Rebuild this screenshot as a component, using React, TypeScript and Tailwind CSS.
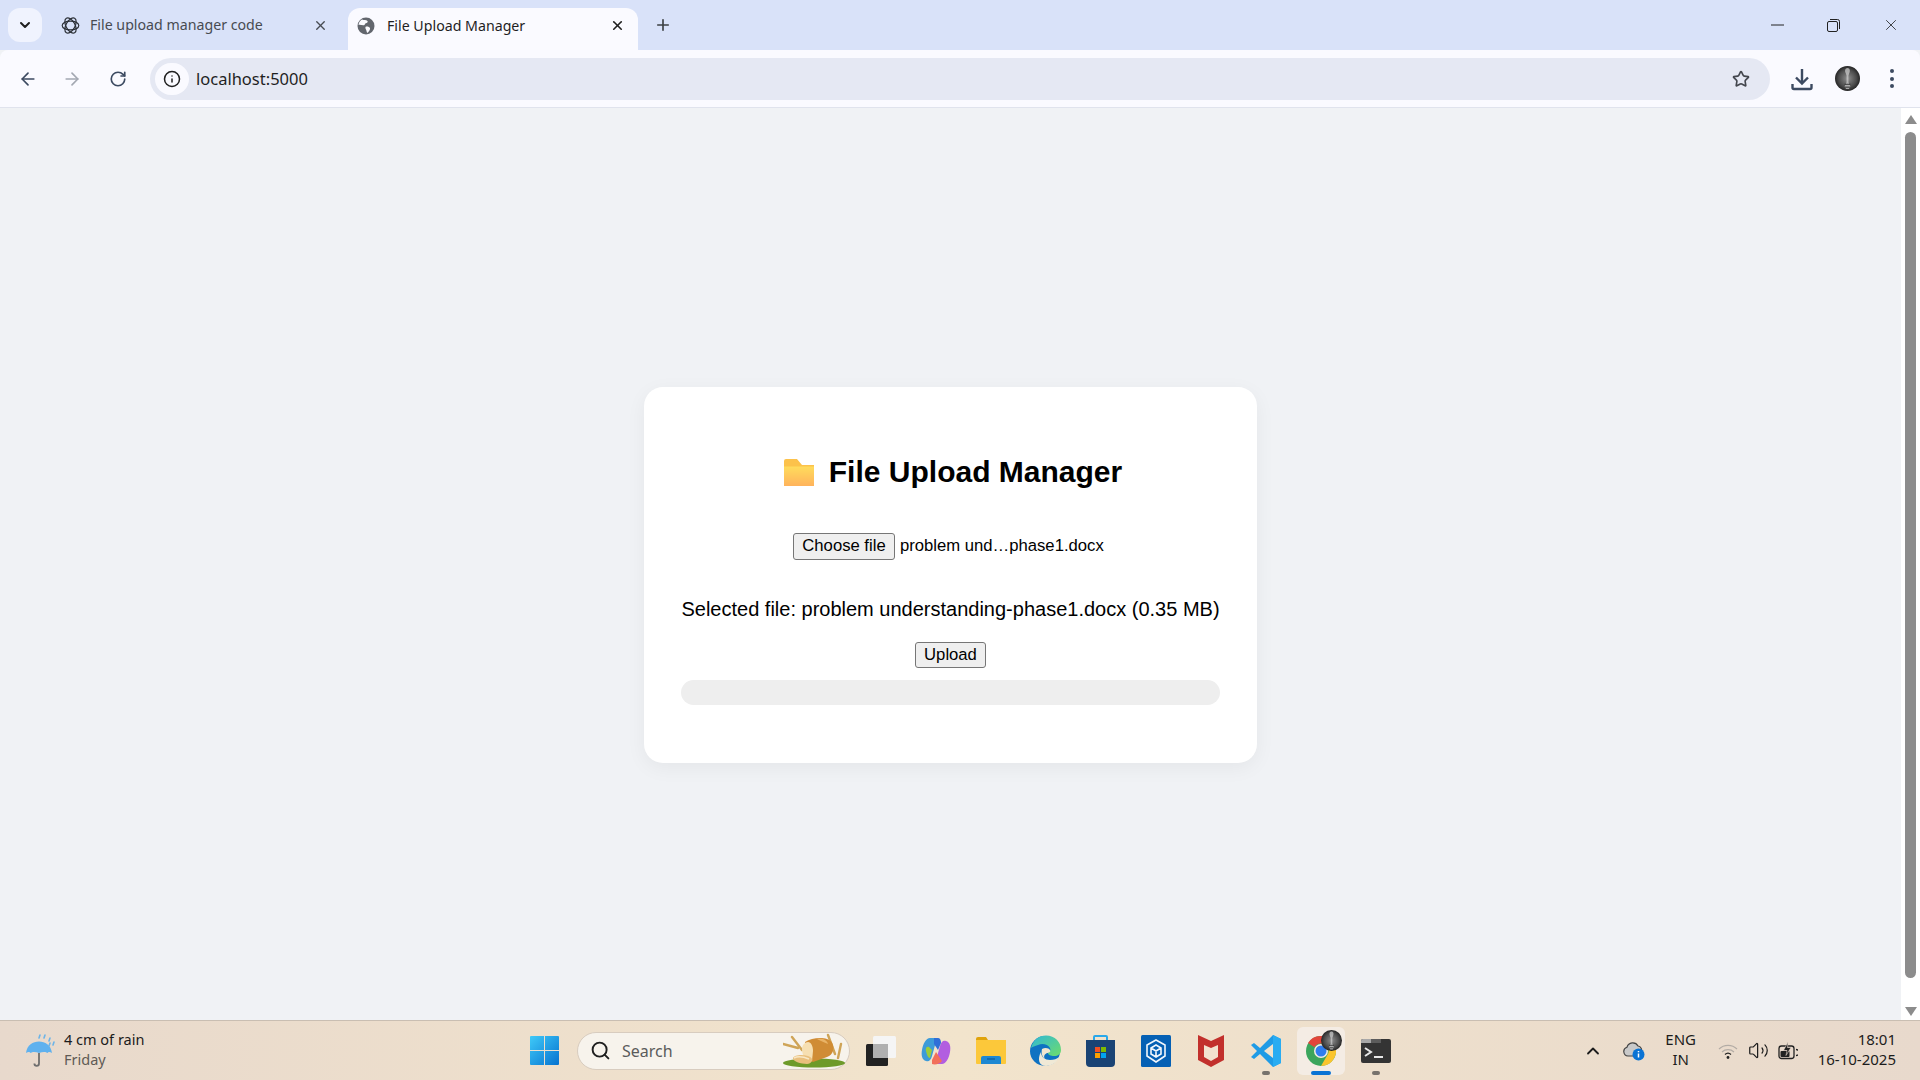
import { ArrowLeft, ArrowRight, ChevronDown, ChevronUp, Info, Plus, RotateCw, Search, Star, Volume2, X } from 'lucide-react';

const uiFont = "font-['Noto_Sans',sans-serif]";

function GptIcon() {
    return (
        <svg width="19" height="19" viewBox="0 0 24 24" fill="none" stroke="#2b2f36" strokeWidth="1.500">
            <ellipse cx="12" cy="12" rx="10.500" ry="5.600" />
            <ellipse cx="12" cy="12" rx="10.500" ry="5.600" transform="rotate(60 12 12)" />
            <ellipse cx="12" cy="12" rx="10.500" ry="5.600" transform="rotate(120 12 12)" />
        </svg>
    );
}

function GlobeIcon() {
    return (
        <svg width="18" height="18" viewBox="0 0 18 18">
            <circle cx="9" cy="9" r="8.500" fill="#62666d" />
            <path d="M5 2.500c2 .8 4 .3 5.500 1.500.8 1-.6 2-1.800 2.300-1 .4-.6 1.800-1.800 2C5.500 8.600 3 7.500 1.500 8 1.800 5.600 3 3.600 5 2.500zM9 9.500c1.500-.4 3.500.2 4 1.500.4 1.500-1 3.500-2.500 5-1-.6-.8-2.500-1.500-3.500-.6-1-1-2.500 0-3z" fill="#fafaff" />
        </svg>
    );
}

function DownloadIcon() {
    return (
        <svg width="22" height="24" viewBox="0 0 22 24" fill="none" stroke="#3c4a61" strokeWidth="2.400">
            <path d="M11 2v14M5 10.500l6 6 6-6" />
            <path d="M1.500 17v3.500a1.500 1.500 0 0 0 1.500 1.500h16a1.500 1.500 0 0 0 1.500-1.500V17" />
        </svg>
    );
}

function Avatar({ size }: { size: number }) {
    return (
        <svg width={size} height={size} viewBox="0 0 26 26">
            <defs>
                <radialGradient id={`av${size}`} cx="50%" cy="50%" r="55%">
                    <stop offset="0%" stopColor="#8f8f8f" />
                    <stop offset="65%" stopColor="#4a4a4a" />
                    <stop offset="100%" stopColor="#181818" />
                </radialGradient>
            </defs>
            <circle cx="13" cy="13" r="13" fill={`url(#av${size})`} />
            <path d="M13 2c2.500 0 3 3 2 5l-1 3v7l2 4-1.500 3h-3L10 21l2-4v-7l-1-3c-1-2-.5-5 2-5z" fill="#c9c9c9" opacity="0.750" />
            <path d="M10 19h6M10.500 22h5" stroke="#2d2d2d" strokeWidth="1" />
        </svg>
    );
}

function FolderEmoji() {
    return (
        <svg width="31" height="27" viewBox="0 0 31 27">
            <defs>
                <linearGradient id="folderFront" x1="0" y1="0" x2="0" y2="1">
                    <stop offset="0%" stopColor="#ffdc5c" />
                    <stop offset="100%" stopColor="#ffb35c" />
                </linearGradient>
            </defs>
            <path d="M1 2q0-2 2-2h11l5 6h12v6H1z" fill="#fcc24b" />
            <path d="M1 7.500h30V27H1z" fill="url(#folderFront)" />
        </svg>
    );
}

function Umbrella() {
    return (
        <svg width="32" height="36" viewBox="0 0 32 36">
            <path d="M1 20C2 12 8 8.500 14 8.500S26 12 27 20c-2-1.500-4-1.500-4.500 0-1.500-1.500-5-1.500-8.500 0-3-1.500-7-1.500-8.500 0C5 18.500 3 18.500 1 20z" fill="#5fb1ee" />
            <path d="M14 20v10.500a2.300 2.300 0 0 1-4.600 0" fill="none" stroke="#6e6e6e" strokeWidth="1.800" />
            <path d="M14 5l1-3M19 5l1-3M24 8l1-3M28 12l1-3M24 13l1-3" stroke="#6cb4e8" strokeWidth="1.600" strokeLinecap="round" />
        </svg>
    );
}

function WinLogo() {
    return (
        <svg width="29" height="29" viewBox="0 0 29 29">
            <defs>
                <linearGradient id="winGrad" x1="0" y1="0" x2="1" y2="1">
                    <stop offset="0%" stopColor="#3fcaf8" />
                    <stop offset="100%" stopColor="#0673d0" />
                </linearGradient>
            </defs>
            <path d="M0 1a1 1 0 0 1 1-1h13v14H0zM15 0h13a1 1 0 0 1 1 1v13H15zM0 15h14v14H1a1 1 0 0 1-1-1zM15 15h14v13a1 1 0 0 1-1 1H15z" fill="url(#winGrad)" />
        </svg>
    );
}

function BreadArt() {
    return (
        <svg width="62" height="36" viewBox="0 0 62 36">
            <ellipse cx="31" cy="30" rx="31" ry="4.500" fill="#6e9a2a" />
            <g fill="none" stroke="#cfa457" strokeWidth="2.400" strokeLinecap="round">
                <path d="M9 4l10 13M0 11l15 4M45 2l7 19M58 11l-3 14" />
            </g>
            <path d="M22 9c6-4 16-5 22-3 6 2 7 7 6 12-1 3-3 5-6 6l-14 5-7-3z" fill="#d08c35" />
            <path d="M34 6c6-1 10 1 11 5-4-2-8-3-11-5z" fill="#e9b366" />
            <path d="M19 16c0-4 3-7 6-7 3 0 5 4 5 9l-1 10-8-3c-1-3-2-6-2-9z" fill="#f6dfb2" />
            <path d="M10 25c1-3 9-4 15-2 3 1 5 3 4 5-1 2-3 3-5 3-6 0-15-3-14-6z" fill="#e9bf7d" />
            <path d="M11 25c4-2 10-1 15 1" fill="none" stroke="#f8e8c6" strokeWidth="1.500" />
        </svg>
    );
}

function TaskView() {
    return (
        <svg width="30" height="30" viewBox="0 0 30 30">
            <rect x="7" y="0" width="23" height="22" rx="1.500" fill="#f5f5f5" />
            <rect x="0" y="8" width="22" height="22" rx="1.500" fill="#222222" />
            <rect x="7" y="8" width="15" height="14" fill="#b0b0b0" />
        </svg>
    );
}

function Copilot() {
    return (
        <svg width="30" height="30" viewBox="0 0 30 30">
            <path d="M9 2h7l-5 18c-1 4-3 6-6 5-4-1-5-6-4-11C2 8 5 2 9 2z" fill="#3d9bd9" />
            <path d="M5 15c-1-3 1-5 3-4l3 3-2 8c-2 0-3-3-4-7z" fill="#9ccc3c" />
            <path d="M21 28h-7l5-18c1-4 3-6 6-5 4 1 5 6 4 11-1 6-4 12-8 12z" fill="#b25ee0" />
            <path d="M11 28c3 1 8 0 10-3l-6-9-4 8z" fill="#f2705a" />
            <path d="M13 2h4c2 0 3 2 3 5l-3 7-4-6z" fill="#2f6fd8" />
        </svg>
    );
}

function Explorer() {
    return (
        <svg width="30" height="27" viewBox="0 0 30 27">
            <path d="M0 2a2 2 0 0 1 2-2h8l2 3h-12z" fill="#e0a30c" />
            <path d="M0 3h30v23a1 1 0 0 1-1 1H1a1 1 0 0 1-1-1z" fill="#fcc83a" />
            <path d="M5 21a2 2 0 0 1 2-2h16a2 2 0 0 1 2 2v6H5z" fill="#1e88d2" />
            <path d="M11 22h8" stroke="#0e5a96" strokeWidth="1.200" />
        </svg>
    );
}

function Edge() {
    return (
        <svg width="31" height="32" viewBox="0 0 31 32">
            <defs>
                <linearGradient id="edgeTop" x1="0" y1="0" x2="1" y2="1">
                    <stop offset="0%" stopColor="#2fb8d8" />
                    <stop offset="100%" stopColor="#6fdc6a" />
                </linearGradient>
            </defs>
            <circle cx="15" cy="16" r="15" fill="#0f72c2" />
            <path d="M1 13C3 5 9 .5 16 .5 25 .5 31 7 31 15c0 4-3 6-7 6-3 0-6-1-6-3 2-1 3-3 2-5-2-4-8-5-12-3-3 1-6 2-7 3z" fill="url(#edgeTop)" />
            <path d="M11 17c0 5 4 8 9 8 4 0 7-1 9-3-2 6-8 9-13 9-7 0-9-7-5-14z" fill="#f0e9d6" />
            <path d="M12 14c3-2 7-1 8 1 1 2-1 3-3 3-2 1-4 3-2 6-3-2-4-6-3-10z" fill="#f2e7d0" />
        </svg>
    );
}

function Store() {
    return (
        <svg width="29" height="32" viewBox="0 0 29 32">
            <path d="M8 5V2a1 1 0 0 1 1-1h11a1 1 0 0 1 1 1v3" fill="none" stroke="#29a8ea" strokeWidth="2" />
            <path d="M0 5h29v23a4 4 0 0 1-4 4H4a4 4 0 0 1-4-4z" fill="#1a4374" />
            <rect x="9" y="12" width="5" height="5" fill="#f25022" />
            <rect x="15" y="12" width="5" height="5" fill="#7fba00" />
            <rect x="9" y="18" width="5" height="5" fill="#fca000" />
            <rect x="15" y="18" width="5" height="5" fill="#00a4ef" />
        </svg>
    );
}

function DevHome() {
    return (
        <svg width="30" height="32" viewBox="0 0 30 32">
            <rect width="30" height="32" rx="1.500" fill="#0560b4" />
            <g fill="none" stroke="#f2f7fc" strokeWidth="1.600">
                <path d="M15 5l9 5v11l-9 6-9-6V10z" />
                <path d="M15 10l5 3v6l-5 3-5-3v-6zM10 13l5 3 5-3M15 16v6" />
            </g>
        </svg>
    );
}

function Mcafee() {
    return (
        <svg width="26" height="32" viewBox="0 0 26 32">
            <path d="M0 0l13 6 13-6v25l-13 7-13-7z" fill="#c2302c" />
            <path d="M6 10l7 3 7-3v12l-7 4-7-4z" fill="#f2e2cf" />
        </svg>
    );
}

function VsCode() {
    return (
        <svg width="30" height="32" viewBox="0 0 30 32">
            <path d="M22 0l8 4v24l-8 4L9 19l-6 5-3-2 6-6-6-6 3-2 6 5z" fill="#1f9be6" />
            <path d="M22 9v14l-9-7z" fill="#f1e3cf" />
            <path d="M22 0l8 4v24l-8 4z" fill="#29acf2" />
        </svg>
    );
}

function Chrome() {
    return (
        <svg width="30" height="30" viewBox="0 0 30 30">
            <circle cx="15" cy="15" r="15" fill="#3ba55c" />
            <path d="M15 0a15 15 0 0 1 13 7.500H15a7.500 7.500 0 0 0-6.500 3.700L2 7A15 15 0 0 1 15 0z" fill="#e2453a" />
            <path d="M28 7.500A15 15 0 0 1 15 30l6.500-11.200A7.500 7.500 0 0 0 21.500 11z" fill="#fbc52d" />
            <circle cx="15" cy="15" r="7" fill="#f5ede5" />
            <circle cx="15" cy="15" r="5.500" fill="#2f7ef0" />
        </svg>
    );
}

function TerminalIcon() {
    return (
        <svg width="30" height="24" viewBox="0 0 30 24">
            <rect width="30" height="24" rx="2" fill="#343434" />
            <path d="M0 2a2 2 0 0 1 2-2h8v4H0z" fill="#a8a8a8" />
            <rect x="10" y="0" width="10" height="4" fill="#5c5c5c" />
            <path d="M4 9l6 4-6 4" fill="none" stroke="#e8e8e8" strokeWidth="2" />
            <path d="M13 18h9" stroke="#e8e8e8" strokeWidth="2" />
        </svg>
    );
}

function CloudInfo() {
    return (
        <svg width="22" height="20" viewBox="0 0 22 20">
            <path d="M5 15a4.500 4.500 0 0 1-1-8.800A6 6 0 0 1 15 5a4 4 0 0 1 3 6v4z" fill="#c9c9c9" stroke="#444444" strokeWidth="1.200" />
            <circle cx="15.500" cy="13.500" r="6" fill="#0a73d4" />
            <path d="M15.500 12.500v4M15.500 10v1.200" stroke="#ffffff" strokeWidth="1.500" />
        </svg>
    );
}

function Wifi() {
    return (
        <svg width="20" height="16" viewBox="0 0 20 16" fill="none">
            <path d="M1 6a13 13 0 0 1 18 0M4 9a9 9 0 0 1 12 0" stroke="#b3aca5" strokeWidth="1.200" />
            <path d="M7 11.500a4.500 4.500 0 0 1 6 0" stroke="#222222" strokeWidth="1.300" />
            <circle cx="10" cy="14.500" r="1.400" fill="#222222" />
        </svg>
    );
}

function Battery() {
    return (
        <svg width="20" height="18" viewBox="0 0 20 18">
            <rect x="1" y="4" width="15" height="12.500" rx="2.500" fill="#e8d9cc" stroke="#222222" strokeWidth="1.300" />
            <rect x="2.500" y="9" width="9" height="6" rx="1" fill="#222222" />
            <path d="M18 7.500a3 3 0 0 1 0 6" fill="none" stroke="#222222" strokeWidth="1.300" />
            <path d="M10 0L5.500 8.500h3.500l-1 5 5-8H9.500z" fill="#222222" stroke="#e8d9cc" strokeWidth="0.600" />
        </svg>
    );
}

const taskbarIcons = [
    <TaskView key="view" />,
    <Copilot key="copilot" />,
    <Explorer key="explorer" />,
    <Edge key="edge" />,
    <Store key="store" />,
    <DevHome key="dev" />,
    <Mcafee key="mcafee" />,
];

function TabStrip() {
    return (
        <div className="flex h-[50px] items-end bg-[#d9e2f9] pl-2">
            <div className="mb-2 flex h-[34px] w-[34px] items-center justify-center rounded-xl bg-[#f0f3fe]">
                <ChevronDown size={16} strokeWidth={3} className="text-[#1f1f1f]" />
            </div>
            <div className="mb-2 flex h-[34px] w-[306px] items-center pl-[19px] pr-5">
                <GptIcon />
                <span className="ml-[10px] flex-1 text-[14.2px] text-[#474b52]">File upload manager code</span>
                <X size={15} strokeWidth={2.200} className="text-[#474b52]" />
            </div>
            <div className="flex h-[42px] w-[290px] items-center rounded-t-xl bg-[#fafaff] pb-[7px] pl-[9px] pr-[13px] text-[#1f1f1f]">
                <GlobeIcon />
                <span className="ml-[12px] flex-1 text-[14.2px]">File Upload Manager</span>
                <X size={15} strokeWidth={2.600} />
            </div>
            <div className="mb-2 ml-[16px] flex h-[34px] items-center text-[#3c4043]">
                <Plus size={18} strokeWidth={2.200} />
            </div>
            <div className="flex-1" />
            <div className="mb-[16px] flex items-center">
                <svg width="13" height="2" className="mr-[43px]"><path d="M0 1h13" stroke="#222222" strokeWidth="1" /></svg>
                <svg width="13" height="13" viewBox="0 0 13 13" className="mr-[42px]" fill="none" stroke="#222222" strokeWidth="1">
                    <rect x="0.500" y="2.500" width="10" height="10" rx="1.500" />
                    <path d="M3 .5h7.500a2 2 0 0 1 2 2V10" />
                </svg>
                <X size={18} strokeWidth={1.100} className="mr-[20px] text-[#222222]" />
            </div>
        </div>
    );
}

function Toolbar() {
    return (
        <div className="flex h-[58px] items-center rounded-t-lg border-b border-[#e0e3ed] bg-[#fafaff] pl-[18px] text-[#3c4a61]">
            <ArrowLeft size={20} strokeWidth={2} />
            <ArrowRight size={20} strokeWidth={2} className="ml-[24px] text-[#a3a8b2]" />
            <RotateCw size={18} strokeWidth={2.200} className="ml-[27px]" />
            <div className="ml-[23px] flex h-[42px] w-[1620px] items-center rounded-full bg-[#e5e8f3] pl-[5px] pr-[20px]">
                <div className="flex h-[32px] w-[34px] items-center justify-center rounded-full bg-[#fafaff]">
                    <Info size={18} strokeWidth={2} className="text-[#1f1f1f]" />
                </div>
                <span className="ml-[7px] flex-1 pt-[2px] text-[16.500px] text-[#1f1f1f]">localhost:5000</span>
                <Star size={18} strokeWidth={2.200} className="text-[#44474e]" />
            </div>
            <div className="ml-[21px]"><DownloadIcon /></div>
            <div className="ml-[22px] flex"><Avatar size={25} /></div>
            <div className="ml-[30px] flex flex-col gap-[3.500px]">
                <span className="h-1 w-1 rounded-full bg-[#3c4a61]" />
                <span className="h-1 w-1 rounded-full bg-[#3c4a61]" />
                <span className="h-1 w-1 rounded-full bg-[#3c4a61]" />
            </div>
        </div>
    );
}

function UploadCard() {
    const buttonClass = 'rounded-[3px] border border-[#767676] bg-[#efefef] text-[16.67px] leading-none text-black';

    return (
        <div className="flex h-[376px] w-[613px] flex-col items-center rounded-[19px] bg-white px-[37px] pb-[58px] pt-[67px] text-black shadow-[0_5px_20px_rgba(0,0,0,0.05)] font-['Liberation_Sans',Arial,sans-serif]">
            <h1 className="ml-[4px] flex h-[36px] items-center text-[30px] font-bold leading-none">
                <span className="mr-[15px] flex"><FolderEmoji /></span>
                File Upload Manager
            </h1>
            <div className="mt-[43px] flex h-[27px] items-center self-start pl-[112px]">
                <button className={`${buttonClass} h-[27px] w-[102px]`}>Choose file</button>
                <span className="ml-[5px] pb-[2px] text-[16.67px]">problem und…phase1.docx</span>
            </div>
            <p className="mt-[38px] h-[23px] text-[20px] leading-[23px]">
                Selected file: problem understanding-phase1.docx (0.35 MB)
            </p>
            <button className={`${buttonClass} mt-[21px] h-[26px] w-[71px]`}>Upload</button>
            <div className="mt-[12px] h-[25px] w-[539px] rounded-full bg-[#eeeeee]" />
        </div>
    );
}

function Scrollbar() {
    return (
        <div className="flex w-[19px] flex-col items-center bg-white">
            <div className="mt-[7px] h-0 w-0 border-x-[6.500px] border-b-[9px] border-x-transparent border-b-[#8c8c8c]" />
            <div className="mt-[8px] w-[11px] flex-1 rounded-full bg-[#8c8c8c]" />
            <div className="mb-[4px] mt-[29px] h-0 w-0 border-x-[6.500px] border-t-[9px] border-x-transparent border-t-[#8c8c8c]" />
        </div>
    );
}

function Taskbar() {
    return (
        <div className="flex h-[60px] items-center border-t border-[#c9beb2] bg-gradient-to-r from-[#e8d9cc] via-[#f2e4cc] to-[#e8d9cc] text-[#1c1c1c]">
            <div className="flex w-[530px] items-center pl-[25px]">
                <Umbrella />
                <div className="mb-[4px] ml-[7px] flex flex-col text-[14.500px] leading-[20px]">
                    <span>4 cm of rain</span>
                    <span className="text-[#5f5a55]">Friday</span>
                </div>
            </div>
            <WinLogo />
            <div className="ml-[18px] flex h-[38px] w-[273px] items-center rounded-full border border-[#d8ccbf] bg-[#f7f3ec] pl-[12px] pr-[4px]">
                <Search size={21} strokeWidth={2.200} className="text-[#1f1f1f]" />
                <span className="ml-[11px] flex-1 text-[16px] text-[#5b5b5b]">Search</span>
                <BreadArt />
            </div>
            <div className="ml-[3px] flex">
                {taskbarIcons.map((icon) => (
                    <div key={icon.key} className="flex h-[48px] w-[55px] items-center justify-center">{icon}</div>
                ))}
                <div className="relative flex h-[48px] w-[55px] items-center justify-center">
                    <VsCode />
                    <span className="absolute bottom-0 h-[4px] w-[8px] rounded-full bg-[#77726c]" />
                </div>
                <div className="relative mx-[3.500px] flex h-[48px] w-[48px] items-center justify-center rounded-md bg-[#f4ece4]">
                    <Chrome />
                    <span className="absolute right-[3px] top-[3px] flex"><Avatar size={21} /></span>
                    <span className="absolute bottom-0 h-[4px] w-[20px] rounded-full bg-[#0a73d4]" />
                </div>
                <div className="relative flex h-[48px] w-[55px] items-center justify-center">
                    <TerminalIcon />
                    <span className="absolute bottom-0 h-[4px] w-[8px] rounded-full bg-[#77726c]" />
                </div>
            </div>
            <div className="flex-1" />
            <div className="flex items-center pr-[24px]">
                <ChevronUp size={20} strokeWidth={2.200} />
                <div className="ml-[20px]"><CloudInfo /></div>
                <div className="mb-[3px] ml-[12px] flex w-[48px] flex-col items-center text-[15px] leading-[20px]">
                    <span>ENG</span>
                    <span>IN</span>
                </div>
                <div className="ml-[13px]"><Wifi /></div>
                <Volume2 size={21} strokeWidth={1.400} className="ml-[10px]" />
                <div className="ml-[9px]"><Battery /></div>
                <div className="mb-[3px] ml-[20px] flex flex-col items-end text-[15px] leading-[20px]">
                    <span>18:01</span>
                    <span>16-10-2025</span>
                </div>
            </div>
        </div>
    );
}

export default function App() {
    return (
        <div className={`flex h-screen w-full flex-col overflow-hidden bg-[#f0f2f5] ${uiFont}`}>
            <TabStrip />
            <Toolbar />
            <div className="flex min-h-0 flex-1">
                <main className="flex flex-1 justify-center pt-[279px]">
                    <UploadCard />
                </main>
                <Scrollbar />
            </div>
            <Taskbar />
        </div>
    );
}
